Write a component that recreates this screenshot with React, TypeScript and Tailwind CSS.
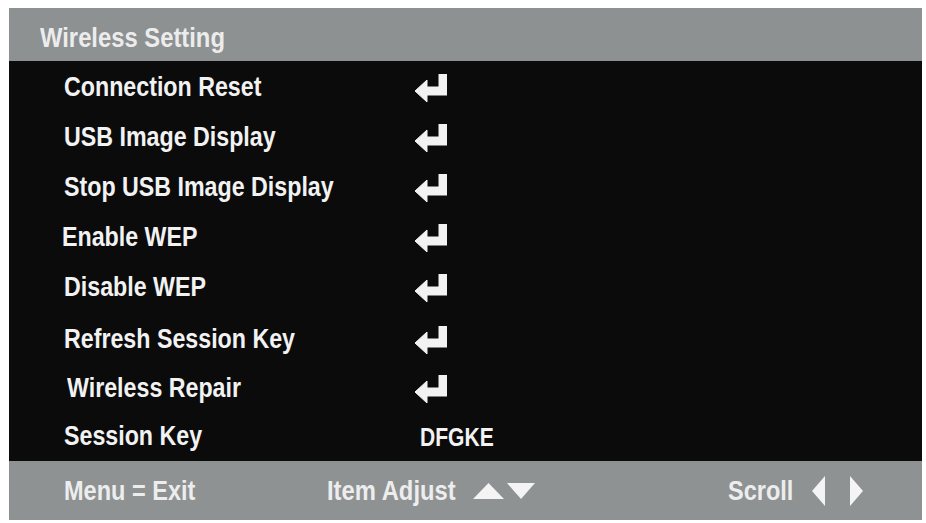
import React from 'react';

const rows: { label: string; value?: string; pad: string; w: string }[] = [
  { label: 'Connection Reset', pad: 'pl-[55px]', w: 'w-[351px]' },
  { label: 'USB Image Display', pad: 'pl-[55px]', w: 'w-[351px]' },
  { label: 'Stop USB Image Display', pad: 'pl-[55px]', w: 'w-[351px]' },
  { label: 'Enable WEP', pad: 'pl-[53px]', w: 'w-[353px]' },
  { label: 'Disable WEP', pad: 'pl-[55px]', w: 'w-[351px]' },
  { label: 'Refresh Session Key', pad: 'pl-[55px] pt-[4px]', w: 'w-[351px]' },
  { label: 'Wireless Repair', pad: 'pl-[58px] pt-[2px]', w: 'w-[348px]' },
  { label: 'Session Key', value: 'DFGKE', pad: 'pl-[55px]', w: 'w-[351px]' },
];

function EnterIcon() {
  return (
    <svg width="32" height="28" viewBox="0 0 32 28" className="block">
      <polygon
        points="24,0 32,0 32,21 12,21 12,28 0,17 12,6 12,13 24,13"
        fill="#f2f2f2"
        stroke="#f2f2f2"
        strokeWidth="1"
        strokeLinejoin="round"
      />
    </svg>
  );
}

function Tri({ dir }: { dir: 'up' | 'down' | 'left' | 'right' }) {
  const pts = {
    up: '0,16 15.5,0 31,16',
    down: '0,0 28,0 14,16',
    left: '13,0 13,30 0,15',
    right: '0,0 0,30 13,15',
  }[dir];
  const size = dir === 'up' ? [31, 16] : dir === 'down' ? [28, 16] : [13, 30];
  return (
    <svg width={size[0]} height={size[1]} viewBox={`0 0 ${size[0]} ${size[1]}`} className="block">
      <polygon points={pts} fill="#f4f4f4" />
    </svg>
  );
}

// condensed look: Arial-width font squeezed horizontally
const squeeze = 'inline-block whitespace-nowrap origin-left font-bold leading-none';

export default function App() {
  const font = { fontFamily: '"Liberation Sans", Arial, sans-serif' };
  return (
    <div className="w-[926px] h-[523px] bg-white pt-[8px] pl-[9px]" style={font}>
      <div className="w-[913px] flex flex-col">
        {/* title bar */}
        <div className="h-[53px] bg-[#8d9192] flex items-center pl-[31px] pt-[7px]">
          <span className={`${squeeze} scale-x-[0.85] text-[28px] text-[#ececec]`}>Wireless Setting</span>
        </div>

        {/* menu items */}
        <div className="bg-[#0b0b0b] flex flex-col pt-[2px]">
          {rows.map((r, i) => (
            <div
              key={r.label}
              className={`${i === rows.length - 1 ? 'h-[48px]' : 'h-[50px]'} flex items-center ${r.pad}`}
            >
              <div className={r.w}>
                <span className={`${squeeze} scale-x-[0.86] text-[27px] text-[#f2f2f2]`}>{r.label}</span>
              </div>
              {r.value ? (
                <span className={`${squeeze} scale-x-[0.81] ml-[5px] text-[26px] text-[#f2f2f2]`}>{r.value}</span>
              ) : (
                <EnterIcon />
              )}
            </div>
          ))}
        </div>

        {/* hint bar */}
        <div className="h-[59px] bg-[#8e9293] flex items-center pl-[55px] text-[#ededed] text-[28px]">
          <div className="w-[263px]">
            <span className={`${squeeze} scale-x-[0.84]`}>Menu = Exit</span>
          </div>
          <div className="w-[401px] flex items-center">
            <div className="w-[146px]">
              <span className={`${squeeze} scale-x-[0.85]`}>Item Adjust</span>
            </div>
            <span className="flex items-center gap-[3px]">
              <Tri dir="up" />
              <Tri dir="down" />
            </span>
          </div>
          <div className="flex items-center">
            <div className="w-[84px]">
              <span className={`${squeeze} scale-x-[0.84]`}>Scroll</span>
            </div>
            <span className="flex items-center gap-[25px]">
              <Tri dir="left" />
              <Tri dir="right" />
            </span>
          </div>
        </div>
      </div>
    </div>
  );
}
